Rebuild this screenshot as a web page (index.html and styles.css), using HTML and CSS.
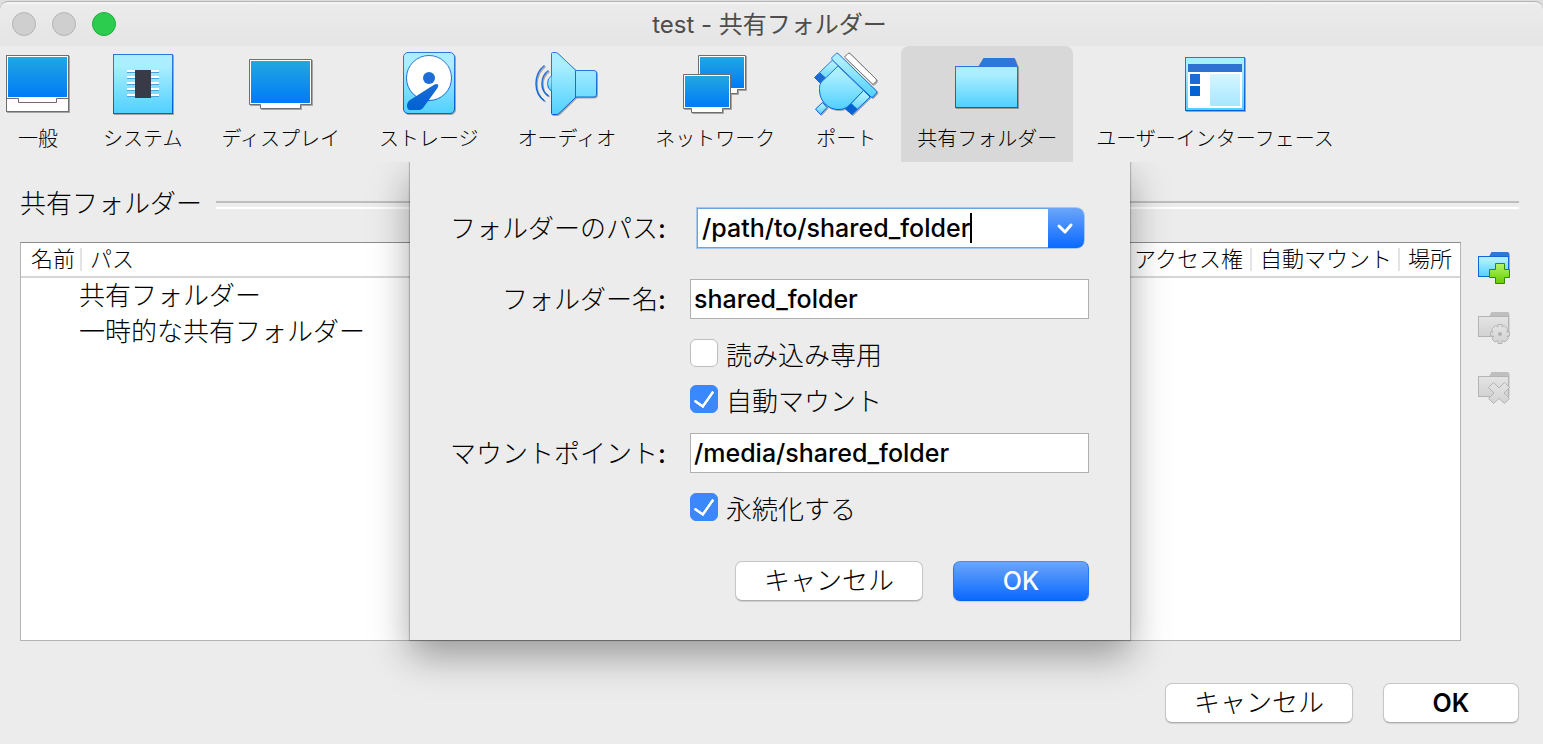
FILE: index.html
```html
<!DOCTYPE html>
<html lang="ja">
<head>
    <meta charset="utf-8">
    <title>test - 共有フォルダー</title>
    <link rel="stylesheet" href="styles.css">
</head>
<body>
    <svg class="defs" aria-hidden="true">
        <defs>
            <linearGradient id="screen" x1="0" y1="0" x2="0" y2="1">
                <stop offset="0" stop-color="#22a7df"/>
                <stop offset="1" stop-color="#007bf8"/>
            </linearGradient>
            <linearGradient id="sky" x1="0" y1="0" x2="0" y2="1">
                <stop offset="0.2" stop-color="#aaeeff"/>
                <stop offset="1" stop-color="#50d0ff"/>
            </linearGradient>
            <linearGradient id="edge" gradientUnits="userSpaceOnUse" x1="0" y1="0" x2="0" y2="64">
                <stop offset="0.2" stop-color="#2f77d5"/>
                <stop offset="0.9" stop-color="#0061d3"/>
            </linearGradient>
            <linearGradient id="pane" x1="0" y1="0" x2="0" y2="1">
                <stop offset="0" stop-color="#d5f6ff"/>
                <stop offset="1" stop-color="#a7e7ff"/>
            </linearGradient>
            <linearGradient id="green" x1="0" y1="0" x2="0" y2="1">
                <stop offset="0" stop-color="#b5f56a"/>
                <stop offset="1" stop-color="#66cc00"/>
            </linearGradient>
            <linearGradient id="gray" x1="0" y1="0" x2="0" y2="1">
                <stop offset="0" stop-color="#e4e4e4"/>
                <stop offset="1" stop-color="#d2d2d2"/>
            </linearGradient>
        </defs>
    </svg>

    <div class="window">
        <header class="titlebar">
            <div class="lights">
                <button class="light" aria-label="閉じる"></button>
                <button class="light" aria-label="しまう"></button>
                <button class="light zoom" aria-label="拡大"></button>
            </div>
            <h1>test - 共有フォルダー</h1>
        </header>

        <nav class="toolbar">
            <button class="tab">
                <svg class="icon" viewBox="0 0 64 64">
                    <rect x="0.5" y="3.5" width="62" height="56" fill="#fff" stroke="#6e6e6e"/>
                    <rect x="2" y="5" width="59" height="40" fill="url(#screen)"/>
                    <path d="M0.5 46.5H12.5V50.5H50.5V46.5H62.5" fill="none" stroke="#6e6e6e"/>
                </svg>
                <span>一般</span>
            </button>
            <button class="tab">
                <svg class="icon" viewBox="0 0 64 64">
                    <rect x="2.5" y="2.5" width="59" height="59" fill="url(#sky)" stroke="url(#edge)"/>
                    <path d="M16 20.5H48M16 26.5H48M16 32.5H48M16 38.5H48M16 44.5H48" stroke="#4aa3dc"/>
                    <path d="M16 19H48M16 25H48M16 31H48M16 37H48M16 43H48" stroke="#fff" stroke-width="2"/>
                    <rect x="24" y="18" width="16" height="28" fill="#383b47"/>
                </svg>
                <span>システム</span>
            </button>
            <button class="tab">
                <svg class="icon" viewBox="0 0 64 64">
                    <path d="M0.5 7.5H62.5V52.5H51.5V56.5H11.5V52.5H0.5Z" fill="#fff" stroke="#6e6e6e"/>
                    <rect x="2" y="9" width="59" height="42" fill="url(#screen)"/>
                </svg>
                <span>ディスプレイ</span>
            </button>
            <button class="tab">
                <svg class="icon" viewBox="0 0 64 64">
                    <rect x="6.5" y="0.5" width="51" height="61" rx="4.5" fill="url(#sky)" stroke="url(#edge)"/>
                    <circle cx="32" cy="26" r="22.5" fill="#fff" stroke="url(#edge)"/>
                    <circle cx="32" cy="26" r="6" fill="#1e6cd6"/>
                    <path d="M37.5 32.5L13 48C10 50 9.5 54 10.5 56C11 57.5 12 58 13 58H21C23.5 58 24.5 57.5 26 56L40.5 36C42.5 32.5 40.5 31 37.5 32.5Z" fill="url(#edge)"/>
                </svg>
                <span>ストレージ</span>
            </button>
            <button class="tab">
                <svg class="icon" viewBox="0 0 64 64">
                    <path d="M16.5 1.5Q16.5 0.5 17.5 0.5H20Q22 0.5 23 1.5L41 18.5H59Q61.5 18.5 61.5 21V42.5Q61.5 45 59 45H41L24 61.5Q22.5 62.5 21 62.5H17.5Q16.5 62.5 16.5 61.5Z" fill="url(#sky)" stroke="url(#edge)"/>
                    <path d="M40.5 18.5V45" fill="none" stroke="#1a6ad4"/>
                    <path d="M16.5 24Q12.5 26 12.5 31.5T16.5 39" fill="url(#sky)" stroke="url(#edge)"/>
                    <path d="M13.5 18.5Q7 23 7 31.5T13.5 44" fill="none" stroke="url(#edge)" stroke-width="1.5"/>
                    <path d="M9.5 13.5Q1 20 1 31.5T9.5 49" fill="none" stroke="url(#edge)" stroke-width="1.5"/>
                </svg>
                <span>オーディオ</span>
            </button>
            <button class="tab">
                <svg class="icon" viewBox="0 0 64 64">
                    <path d="M15.5 3.5H62.5V37.5H54.5V41.5H23.5V37.5H15.5Z" fill="#fff" stroke="#6e6e6e"/>
                    <rect x="17" y="5" width="44" height="31" fill="url(#screen)"/>
                    <path d="M0.5 22.5H47.5V56.5H39.5V60.5H8.5V56.5H0.5Z" fill="#fff" stroke="#6e6e6e"/>
                    <rect x="2" y="24" width="44" height="31" fill="url(#screen)"/>
                </svg>
                <span>ネットワーク</span>
            </button>
            <button class="tab">
                <svg class="icon" viewBox="0 0 64 64">
                    <path d="M30.5 5L34 1.5Q35 0.5 36 1.5L62 27Q63 28 62 29.5L59 32.5Z" fill="#fff" stroke="#6e6e6e"/>
                    <path d="M18.5 8L24.5 14L6.5 31.5L0.5 25.5Z" fill="url(#sky)" stroke="url(#edge)"/>
                    <path d="M0.5 25.5L6 20.5L12 26L6.5 31.5Z" fill="#1c69d4"/>
                    <path d="M49.5 38.5L56 45L38 62.5L31.5 57Z" fill="url(#sky)" stroke="url(#edge)"/>
                    <path d="M31.5 57L37 51L43.5 57L38 62.5Z" fill="#0463d3"/>
                    <path d="M8.5 50.5L13 55.5L6.5 62.5L1.5 57Z" fill="url(#sky)" stroke="url(#edge)"/>
                    <path d="M24 14L10 27.5C5.5 31 5.5 34 5.5 38C5.5 49 14 57.5 24 57.5C30 57.5 33 55.5 36 52.5L49.5 38.5Z" fill="url(#sky)" stroke="url(#edge)"/>
                    <path d="M22 1.5Q23 0.5 24 1.5L62.5 39Q63.5 40 62.5 41L59 45Q58 46 57 45L18.5 8Q16.5 6 18.5 5Z" fill="url(#sky)" stroke="url(#edge)"/>
                </svg>
                <span>ポート</span>
            </button>
            <button class="tab selected">
                <svg class="icon" viewBox="0 0 64 64">
                    <path d="M23 15L28.5 6H59.5L63 15Z" fill="#2f77d5"/>
                    <rect x="0.5" y="14.5" width="62" height="41" fill="url(#sky)" stroke="url(#edge)"/>
                </svg>
                <span>共有フォルダー</span>
            </button>
            <button class="tab">
                <svg class="icon" viewBox="0 0 64 64">
                    <rect x="2.5" y="5.5" width="59" height="53" fill="url(#sky)" stroke="url(#edge)"/>
                    <rect x="5" y="12" width="54" height="44" fill="#fff"/>
                    <rect x="5" y="12" width="54" height="8" fill="#2f73d2"/>
                    <rect x="7" y="22" width="10" height="10" fill="#1c6bd4"/>
                    <rect x="7" y="34" width="10" height="10" fill="#0463d3"/>
                    <rect x="27" y="22" width="30" height="32" fill="url(#pane)"/>
                </svg>
                <span>ユーザーインターフェース</span>
            </button>
        </nav>

        <main class="content">
            <h2 class="group-title">共有フォルダー</h2>

            <div class="folders">
                <div class="list">
                    <table>
                        <thead>
                            <tr>
                                <th class="col-name"><span>名前</span></th>
                                <th><span>パス</span></th>
                                <th class="col-access"><span>アクセス権</span></th>
                                <th class="col-mount"><span>自動マウント</span></th>
                                <th class="col-place"><span>場所</span></th>
                            </tr>
                        </thead>
                        <tbody>
                            <tr><td colspan="5">共有フォルダー</td></tr>
                            <tr><td colspan="5">一時的な共有フォルダー</td></tr>
                        </tbody>
                    </table>
                </div>
                <div class="actions">
                    <button aria-label="追加">
                        <svg viewBox="0 0 32 32">
                            <path d="M11 4.5L13.5 0H29.5Q31 0 31.5 2V24H30V4.5Z" fill="#2f77d5"/>
                            <rect x="0.5" y="4.5" width="30" height="20" fill="url(#sky)" stroke="#1068d4"/>
                            <path d="M17.5 11.5H26.5V17.5H31.5V25.5H26.5V31.5H17.5V25.5H11.5V17.5H17.5Z" fill="url(#green)" stroke="#2f8a00"/>
                        </svg>
                    </button>
                    <button aria-label="編集" disabled>
                        <svg viewBox="0 0 32 32">
                            <path d="M11 4.5L13.5 0H29.5Q31 0 31.5 2V24H30V4.5Z" fill="#bfbfbf"/>
                            <rect x="0.5" y="4.5" width="30" height="20" fill="url(#gray)" stroke="#b4b4b4"/>
                            <path d="M20 12.5H24V15L26 13.5L30 17.5L28.5 20H31.5V24H29L30.5 26.5L27 30L24 28.5V31.5H20V28.5L17 30L14 27L15.5 24H12.5V20H15L13.5 17.5L17.5 13.5L20 15Z" fill="url(#gray)" stroke="#b4b4b4"/>
                            <circle cx="22" cy="22" r="2" fill="#b0b0b0"/>
                        </svg>
                    </button>
                    <button aria-label="削除" disabled>
                        <svg viewBox="0 0 32 32">
                            <path d="M11 4.5L13.5 0H29.5Q31 0 31.5 2V24H30V4.5Z" fill="#bfbfbf"/>
                            <rect x="0.5" y="4.5" width="30" height="20" fill="url(#gray)" stroke="#b4b4b4"/>
                            <path d="M15.5 10.5L21 16L26.5 10.5L31.5 15.5L26 21L31.5 26.5L26.5 31.5L21 26.5L15.5 31.5L10.5 26.5L16 21L10.5 15.5Z" fill="url(#gray)" stroke="#b4b4b4"/>
                        </svg>
                    </button>
                </div>
            </div>

            <div class="buttons">
                <button class="push">キャンセル</button>
                <button class="push ok">OK</button>
            </div>

            <form class="sheet" onsubmit="return false">
                <label class="caption" for="path">フォルダーのパス<b>:</b></label>
                <div class="combo">
                    <div class="combo-text">
                        <input type="text" id="path" value="/path/to/shared_folder" spellcheck="false">
                        <span class="caret"></span>
                    </div>
                    <button type="button" aria-label="フォルダーを選択">
                        <svg viewBox="0 0 36 40"><path d="M11 18L17 24L23 17" fill="none" stroke="#fff" stroke-width="3" stroke-linecap="round" stroke-linejoin="round"/></svg>
                    </button>
                </div>

                <label class="caption" for="name">フォルダー名<b>:</b></label>
                <input class="field" type="text" id="name" value="shared_folder" spellcheck="false">

                <div class="checks">
                    <label><input type="checkbox">読み込み専用</label>
                    <label><input type="checkbox" checked>自動マウント</label>
                </div>

                <label class="caption" for="mount">マウントポイント<b>:</b></label>
                <input class="field" type="text" id="mount" value="/media/shared_folder" spellcheck="false">

                <div class="checks">
                    <label><input type="checkbox" checked>永続化する</label>
                </div>

                <div class="sheet-buttons">
                    <button type="button" class="push">キャンセル</button>
                    <button type="submit" class="push ok default">OK</button>
                </div>
            </form>
        </main>
    </div>
</body>
</html>
```
FILE: styles.css
```css
* {
    box-sizing: border-box;
}

body {
    margin: 0;
    background-color: #dedede;
    color: #000;
    font-family: Inter, "Noto Sans CJK JP", sans-serif;
    font-size: 26px;
    font-weight: 300;
}

button,
input {
    font: inherit;
    color: inherit;
    margin: 0;
    padding: 0;
    border: none;
    background: none;
}

svg {
    display: block;
}

.defs {
    position: absolute;
    width: 0;
    height: 0;
}

.window {
    display: flex;
    flex-direction: column;
    min-height: 100vh;
    padding-top: 1px;
}

/* title bar */
.titlebar {
    display: grid;
    grid-template-columns: 1fr auto 1fr;
    align-items: center;
    height: 45px;
    padding: 0 16px 0 12px;
    border-top: 1px solid #b2b2b2;
    border-radius: 8px 8px 0 0;
    background: linear-gradient(#f6f6f6, #ebebeb 3px, #e5e5e5);
}

.titlebar h1 {
    margin: 0;
    padding-top: 2px;
    color: #4d4d4d;
    font-size: 24px;
    font-weight: 400;
    line-height: 42px;
}

.lights {
    display: flex;
    gap: 16px;
}

.light {
    width: 24px;
    height: 24px;
    border: 1px solid #b3b3b3;
    border-radius: 50%;
    background-color: #cfcfcf;
}

.light.zoom {
    border-color: #1fae3a;
    background-color: #2ccc4f;
}

/* toolbar */
.toolbar {
    position: relative;
    z-index: 2;
    display: flex;
    gap: 7px;
    background-color: #ececec;
}

.tab {
    display: flex;
    flex-direction: column;
    align-items: center;
    gap: 8px;
    height: 116px;
    padding: 6px 16px 0;
    border-radius: 8px 8px 0 0;
    font-size: 20px;
    line-height: 30px;
    white-space: nowrap;
}

.tab:first-child {
    margin-right: 4px;
    padding: 6px 6px 0;
}

.tab.selected {
    background-color: #d8d8d8;
}

.icon {
    width: 64px;
    height: 64px;
    filter: drop-shadow(1px 1px 0 rgba(0, 0, 0, 0.3));
}

/* page */
.content {
    position: relative;
    flex: 1;
    display: flex;
    flex-direction: column;
    padding: 22px 24px 21px 20px;
    background-color: #ececec;
}

.group-title {
    display: flex;
    align-items: center;
    gap: 14px;
    margin: 0 0 18px;
    font-size: 26px;
    font-weight: 300;
    line-height: 40px;
}

.group-title::after {
    content: "";
    flex: 1;
    height: 4px;
    margin-top: 2px;
    border-top: 2px solid #bdbdbd;
    border-bottom: 2px solid #fff;
}

.folders {
    flex: 1;
    display: flex;
    gap: 17px;
}

.list {
    flex: 1;
    border: 1px solid #b4b4b4;
    border-top-color: #8c8c8c;
    background-color: #fff;
}

.list table {
    width: 100%;
    border-collapse: collapse;
    table-layout: fixed;
}

.list th {
    padding: 5px 0;
    border-bottom: 2px solid #d6d6d6;
    font-size: 22px;
    font-weight: 300;
    text-align: left;
    white-space: nowrap;
}

.list th span {
    display: block;
    padding-left: 8px;
    border-left: 2px solid #e4e4e4;
    line-height: 23px;
}

.list .col-name span {
    border-left-color: transparent;
}

.col-name {
    width: 59px;
}

.col-access {
    width: 126px;
}

.col-mount {
    width: 148px;
}

.col-place {
    width: 62px;
}

.list td {
    padding: 0 0 0 58px;
    line-height: 36px;
}

.actions {
    display: flex;
    flex-direction: column;
    gap: 28px;
    width: 41px;
    padding-top: 10px;
}

.actions svg {
    width: 32px;
    height: 32px;
}

/* buttons */
.buttons,
.sheet-buttons {
    display: flex;
    justify-content: flex-end;
    gap: 30px;
}

.buttons {
    margin-top: 42px;
}

.push {
    width: 188px;
    height: 40px;
    border: 1px solid #c6c6c6;
    border-bottom-color: #adadad;
    border-radius: 7px;
    background-color: #fff;
    box-shadow: 0 1px 1px rgba(0, 0, 0, 0.12);
    line-height: 38px;
}

.push.ok {
    width: 136px;
    font-size: 25px;
    font-weight: 600;
}

.push.default {
    border-color: #4a8df0 #2a78f0 #0a62e8;
    background: linear-gradient(#6ba5f9, #0a69ff);
    color: #fff;
    font-weight: 500;
}

/* shared folder sheet */
.sheet {
    position: absolute;
    z-index: 1;
    top: 0;
    left: 0;
    right: 3px;
    display: grid;
    grid-template-columns: 1fr 399px;
    gap: 20px 24px;
    width: 720px;
    margin: 0 auto;
    padding: 46px 41px 39px 20px;
    background-color: #ececec;
    box-shadow: 0 0 1px 1px rgba(0, 0, 0, 0.2), 0 16px 36px rgba(0, 0, 0, 0.35);
}

.caption {
    height: 40px;
    line-height: 42px;
    text-align: right;
}

.caption b {
    font-weight: 500;
}

.field,
.combo {
    height: 40px;
    background-color: #fff;
    font-size: 25px;
    font-weight: 500;
}

.field {
    width: 100%;
    padding: 0 3px;
    border: 1px solid #b0b0b0;
    outline: none;
}

.combo {
    display: flex;
    margin: 0 5px 11px 7px;
    border-radius: 0 8px 8px 0;
    box-shadow: 0 0 0 1px #a3c9f2;
}

.combo-text {
    flex: 1;
    display: flex;
    align-items: center;
    padding-left: 4px;
    border: 1px solid #6ba3dd;
    border-right: none;
}

.combo input {
    field-sizing: content;
    outline: none;
}

.caret {
    width: 2px;
    height: 30px;
    background-color: #000;
}

.combo button {
    width: 36px;
    border-radius: 0 7px 7px 0;
    background: linear-gradient(#6ba5f9, #0a69ff);
}

.checks {
    grid-column: 2;
    display: flex;
    flex-direction: column;
    gap: 18px;
}

.checks label {
    display: flex;
    align-items: center;
    gap: 8px;
    height: 28px;
}

.checks input {
    display: grid;
    place-items: center;
    width: 28px;
    height: 28px;
    border: 1px solid #bdbdbd;
    border-radius: 6px;
    background-color: #fff;
    appearance: none;
}

.checks input:checked {
    border-color: #3b88fd;
    background-color: #3b88fd;
}

.checks input:checked::after {
    content: "";
    width: 9px;
    height: 17px;
    margin-bottom: 4px;
    border: solid #fff;
    border-width: 0 3px 3px 0;
    border-radius: 1px;
    transform: rotate(35deg);
}

.sheet-buttons {
    grid-column: 1 / 3;
    margin-top: 20px;
}
```
